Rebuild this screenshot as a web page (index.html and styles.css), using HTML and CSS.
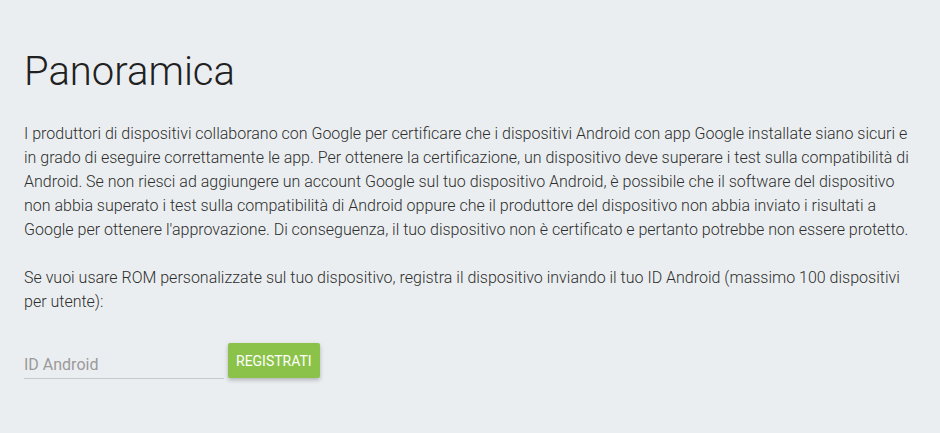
FILE: index.html
```
<!DOCTYPE html>
<html lang="it">
<head>
    <meta charset="UTF-8">
    <meta name="viewport" content="width=device-width, initial-scale=1.0">
    <title>Panoramica</title>
    <link rel="stylesheet" href="styles.css">
</head>
<body>
    <div class="page">
        <h1>Panoramica</h1>
        <p>I produttori di dispositivi collaborano con Google per certificare che i dispositivi Android con app Google installate siano sicuri e in grado di eseguire correttamente le app. Per ottenere la certificazione, un dispositivo deve superare i test sulla compatibilità di Android. Se non riesci ad aggiungere un account Google sul tuo dispositivo Android, è possibile che il software del dispositivo non abbia superato i test sulla compatibilità di Android oppure che il produttore del dispositivo non abbia inviato i risultati a Google per ottenere l'approvazione. Di conseguenza, il tuo dispositivo non è certificato e pertanto potrebbe non essere protetto.</p>
        <p>Se vuoi usare ROM personalizzate sul tuo dispositivo, registra il dispositivo inviando il tuo ID Android (massimo 100 dispositivi per utente):</p>
        <form class="register-form">
            <input type="text" class="android-id" placeholder="ID Android">
            <button type="submit">Registrati</button>
        </form>
    </div>
</body>
</html>
```

FILE: styles.css
```
:root {
    --bg-color: #EBEEF1;
    --text-color: #2E2E2E;
    --muted-color: #9A9A9A;
    --green: #8BC34A;
}

body {
    font-family: Roboto, "Noto Sans", sans-serif;
    background-color: var(--bg-color);
    color: var(--text-color);
    margin: 0;
    padding: 0;
}

.page {
    padding: 44px 24px 24px;
    max-width: 892px;
}

h1 {
    font-size: 40px;
    font-weight: 300;
    color: #212121;
    margin: 0 0 22px;
    line-height: 56px;
}

p {
    font-size: 16px;
    font-weight: 300;
    line-height: 24px;
    margin: 0 0 24px;
}

.register-form {
    display: flex;
    align-items: flex-end;
    gap: 4px;
    margin-top: 29px;
}

.android-id {
    width: 200px;
    font-family: inherit;
    font-size: 16px;
    color: var(--text-color);
    background: transparent;
    border: none;
    border-bottom: 1px solid #C8C8C8;
    padding: 6px 0 4px;
    outline: none;
}

.android-id::placeholder {
    color: var(--muted-color);
}

button {
    margin-bottom: 1px;
    height: 35px;
    padding: 0 8px;
    background-color: var(--green);
    color: white;
    border: none;
    border-radius: 2px;
    font-family: inherit;
    font-size: 14px;
    text-transform: uppercase;
    box-shadow: 0 2px 4px rgba(0, 0, 0, 0.25);
    cursor: pointer;
}
```
